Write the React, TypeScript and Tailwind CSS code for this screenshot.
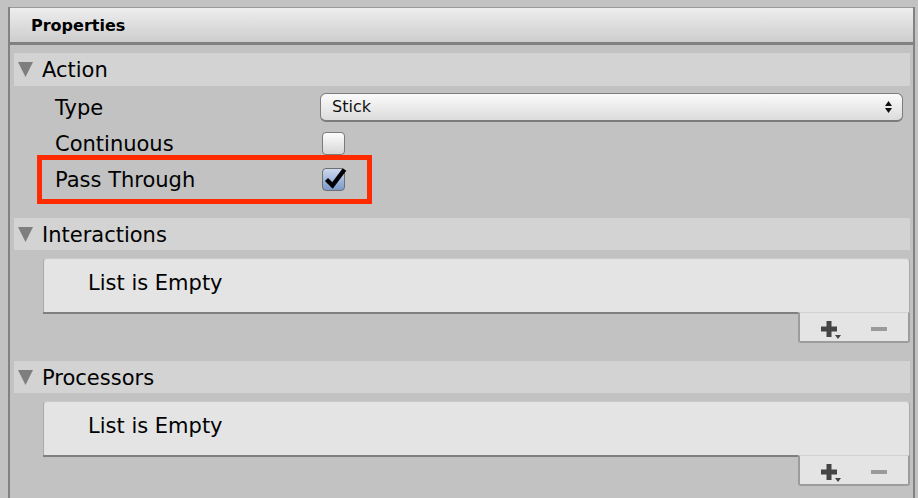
import React from 'react';

const font = { fontFamily: '"DejaVu Sans", "Liberation Sans", sans-serif' };

function Foldout({ label }: { label: string }) {
  return (
    <div className="ml-[4px] mr-[3px] flex h-[32px] items-center bg-[#d3d3d3] pl-[4px]">
      <svg width="15" height="15" viewBox="0 0 15 15" className="flex-none">
        <polygon points="0,0 15,0 7.5,15" fill="#7e7e7e" />
      </svg>
      <span className="ml-[9px] pt-[2px] text-[21px] leading-none text-black">{label}</span>
    </div>
  );
}

function Checkbox({ checked }: { checked?: boolean }) {
  return (
    <span
      className={
        checked
          ? 'relative ml-[2px] block h-[23px] w-[23px] rounded-[4px] border border-[#6f6f6f] bg-gradient-to-b from-[#cdd9ee] to-[#7b99ca]'
          : 'relative ml-[2px] block h-[23px] w-[23px] rounded-[4px] border border-[#7b7b7b] bg-gradient-to-b from-[#fdfdfd] to-[#d6d6d6]'
      }
    >
      {checked && (
        <svg width="23" height="23" viewBox="0 0 23 23" className="absolute left-0 top-0 overflow-visible">
          <path d="M3.5 10.5 L9.5 16.5 L21.5 0.5" fill="none" stroke="#000" strokeWidth="4.4" strokeLinejoin="miter" />
        </svg>
      )}
    </span>
  );
}

function PropRow({ label, children }: { label: string; children: React.ReactNode }) {
  return (
    <div className="flex h-[36px] items-center pl-[45px]">
      <span className="w-[265px] flex-none pt-[2px] text-[21px] leading-none text-black">{label}</span>
      <div className="flex flex-1 items-center pr-[10px]">{children}</div>
    </div>
  );
}

function ReorderList() {
  return (
    <div className="ml-[33px] mr-[3px] mt-[8px]">
      <div className="flex h-[54px] items-center rounded-t-[4px] border-x border-t border-x-[#a9a9a9] border-t-[#c9c9c9] bg-[#e4e4e4] pb-[4px] pl-[44px]">
        <span className="text-[21px] leading-none text-black">List is Empty</span>
      </div>
      <div className="flex">
        <div className="h-[2px] flex-1 bg-[#7f7f7f]" />
        <div className="flex h-[31px] w-[112px] items-start rounded-b-[3px] border-x-2 border-b-2 border-t border-x-[#9c9c9c] border-b-[#9c9c9c] border-t-[#d2d2d2] bg-[#e4e4e4] pl-[21px] pt-[8px]">
          <svg width="22" height="20" viewBox="0 0 22 20" className="flex-none">
            <rect x="0" y="5.5" width="16" height="5" fill="#444" />
            <rect x="5.5" y="0" width="5" height="16" fill="#444" />
            <polygon points="14,14 20,14 17,18" fill="#444" />
          </svg>
          <span className="ml-[28px] mt-[6px] block h-[4px] w-[16px] bg-[#9a9a9a]" />
        </div>
      </div>
    </div>
  );
}

export default function App() {
  return (
    <div className="h-[498px] w-[918px] overflow-hidden bg-[#c2c2c2]" style={font}>
      <div className="ml-[8px] h-full w-[907px] border-x-2 border-[#828282]">
        <div className="mt-[7px] flex h-[38px] items-center border-b-[3px] border-t border-b-[#808080] border-t-[#9a9a9a] bg-gradient-to-b from-[#eeeeee] to-[#cdcdcd] pl-[21px]">
          <span className="pt-[2px] text-[16px] font-bold leading-none text-black">Properties</span>
        </div>

        <div className="mt-[8px]">
          <div className="flex h-[33px] items-center ml-[4px] mr-[3px] bg-[#d3d3d3] pl-[4px]">
            <svg width="15" height="15" viewBox="0 0 15 15" className="flex-none">
              <polygon points="0,0 15,0 7.5,15" fill="#7e7e7e" />
            </svg>
            <span className="ml-[9px] pt-[2px] text-[21px] leading-none text-black">Action</span>
          </div>
        </div>

        <div className="mt-[3px]">
          <PropRow label="Type">
            <div className="flex h-[29px] w-full items-center justify-between rounded-[6px] border border-b-2 border-[#7c7c7c] bg-gradient-to-b from-[#fbfbfb] to-[#dcdcdc] pl-[11px] pr-[10px]">
              <span className="text-[16px] leading-none text-[#111]">Stick</span>
              <svg width="7" height="12" viewBox="0 0 7 12">
                <polygon points="3.5,0 7,5 0,5" fill="#111" />
                <polygon points="0,7 7,7 3.5,12" fill="#111" />
              </svg>
            </div>
          </PropRow>
          <PropRow label="Continuous">
            <Checkbox />
          </PropRow>
          <div className="relative">
            <PropRow label="Pass Through">
              <Checkbox checked />
            </PropRow>
            <div className="pointer-events-none absolute left-[27px] top-[-6px] h-[49px] w-[335px] border-[5px] border-[#ff2a00]" />
          </div>
        </div>

        <div className="mt-[21px]">
          <Foldout label="Interactions" />
          <ReorderList />
        </div>

        <div className="mt-[18px]">
          <Foldout label="Processors" />
          <ReorderList />
        </div>
      </div>
    </div>
  );
}
